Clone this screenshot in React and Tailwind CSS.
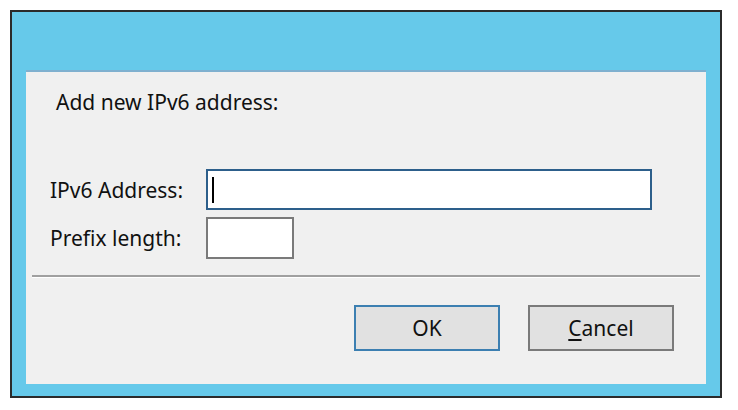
export default function App() {
    return (
        <div className="h-[410px] w-[738px] bg-white p-[10px]" style={{ fontFamily: '"Noto Sans", "Open Sans", sans-serif' }}>
            <div className="h-[388px] w-[712px] border-2 border-[#2b2b2b] bg-[#66c9ea] pb-[12px] pl-[14px] pr-[14px] pt-[58px]">
                <div className="flex h-[314px] w-[680px] flex-col border-t-2 border-[#7fb0cf] bg-[#f0f0f0] text-[21px] text-[#111111]">
                    <div className="ml-[30px] mt-[17px] leading-[26px]">Add new IPv6 address:</div>

                    <div className="ml-[24px] mt-[54px] flex items-center">
                        <span className="w-[156px] leading-[26px]">IPv6 Address:</span>
                        <div className="flex h-[41px] w-[446px] items-center border-2 border-[#2d5f8b] bg-white pl-[4px]">
                            <div className="h-[26px] w-[2px] bg-black" />
                        </div>
                    </div>

                    <div className="ml-[24px] mt-[7px] flex items-center">
                        <span className="w-[156px] leading-[26px]">Prefix length:</span>
                        <div className="h-[42px] w-[88px] border-2 border-[#7a7a7a] bg-white" />
                    </div>

                    <div className="ml-[6px] mt-[16px] w-[668px] border-t-2 border-b border-t-[#a0a0a0] border-b-white" />

                    <div className="ml-[328px] mt-[27px] flex gap-[28px]">
                        <button type="button" className="h-[46px] w-[146px] border-2 border-[#3c7fb1] bg-[#e1e1e1] leading-[26px]">
                            OK
                        </button>
                        <button type="button" className="h-[46px] w-[146px] border-2 border-[#7a7a7a] bg-[#e1e1e1] leading-[26px]">
                            <span className="underline underline-offset-[3px]">C</span>ancel
                        </button>
                    </div>
                </div>
            </div>
        </div>
    );
}
